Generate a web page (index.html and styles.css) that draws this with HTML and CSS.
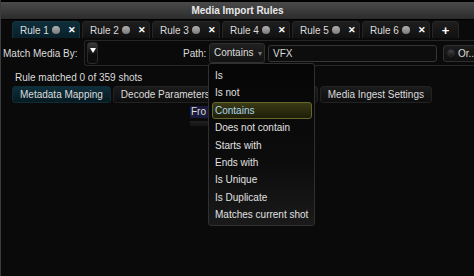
FILE: index.html
```html
<!DOCTYPE html>
<html lang="en">
<head>
  <meta charset="UTF-8">
  <title>Media Import Rules</title>
  <link rel="stylesheet" href="styles.css">
</head>
<body>
  <div class="titlebar">Media Import Rules</div>

  <div class="rule-tabs">
    <div class="tab active">Rule 1 <span class="dot"></span><span class="close">&#x2715;</span></div>
    <div class="tab">Rule 2 <span class="dot"></span><span class="close">&#x2715;</span></div>
    <div class="tab">Rule 3 <span class="dot"></span><span class="close">&#x2715;</span></div>
    <div class="tab">Rule 4 <span class="dot"></span><span class="close">&#x2715;</span></div>
    <div class="tab">Rule 5 <span class="dot"></span><span class="close">&#x2715;</span></div>
    <div class="tab">Rule 6 <span class="dot"></span><span class="close">&#x2715;</span></div>
    <div class="tab add">+</div>
  </div>

  <div class="match-row">
    <label class="match-label">Match Media By:</label>
    <div class="frame">
      <div class="drop-btn"><span class="arrow"></span></div>
      <label class="path-label">Path:</label>
      <div class="combo">Contains <span class="caret">&#x25BE;</span></div>
      <div class="field">VFX</div>
      <div class="or-btn"><span class="radio"></span>Or...</div>
    </div>
  </div>

  <p class="matched">Rule matched 0 of 359 shots</p>

  <div class="page-tabs">
    <div class="ptab active">Metadata Mapping</div>
    <div class="ptab">Decode Parameters</div>
    <div class="ptab hidden-tab"></div>
    <div class="ptab">Media Ingest Settings</div>
  </div>

  <div class="from-row">
    <span class="from">Fro</span>
    <span class="from-bar"></span>
  </div>

  <ul class="popup">
    <li>Is</li>
    <li>Is not</li>
    <li class="current">Contains</li>
    <li>Does not contain</li>
    <li>Starts with</li>
    <li>Ends with</li>
    <li>Is Unique</li>
    <li>Is Duplicate</li>
    <li>Matches current shot</li>
  </ul>
</body>
</html>
```

FILE: styles.css
```css
* {
  margin: 0;
  padding: 0;
  box-sizing: border-box;
}

body {
  width: 474px;
  height: 276px;
  overflow: hidden;
  position: relative;
  background-color: #0a0a0a;
  border-left: 1px solid #3c3c3c;
  font-family: 'Liberation Sans', Arial, sans-serif;
  font-size: 10px;
  color: #dcdcdc;
}

.titlebar {
  height: 20px;
  border-top: 2px solid #000;
  border-bottom: 1px solid #000;
  background: linear-gradient(#4a4a4a, #2c2c2c);
  text-align: center;
  font-weight: bold;
  line-height: 18px;
  color: #e8e8e8;
}

.rule-tabs {
  display: flex;
  gap: 2px;
  padding-left: 11px;
  margin-top: 1px;
  height: 17px;
}

.tab {
  width: 68px;
  display: flex;
  align-items: center;
  padding-left: 7px;
  border: 1px solid #262626;
  border-bottom: none;
  border-radius: 4px 4px 0 0;
  background: linear-gradient(#1e1e1e, #111);
  white-space: pre;
}

.tab.active {
  background: linear-gradient(#0f2f3b, #08202a);
  border-color: #143440;
}

.tab.add {
  width: 27px;
  justify-content: center;
  padding-left: 0;
  font-weight: bold;
  font-size: 13px;
  color: #fff;
}

.dot {
  width: 8px;
  height: 8px;
  border-radius: 50%;
  background: linear-gradient(#b0b0b0, #7a7a7a);
}

.close {
  margin-left: 8px;
  font-weight: bold;
  font-size: 9px;
  color: #fff;
}

.match-row {
  display: flex;
  align-items: center;
  height: 26px;
  margin-top: 2px;
}

.match-label {
  flex-shrink: 0;
  width: 83px;
  padding-left: 2px;
  white-space: nowrap;
}

.frame {
  flex: 1;
  min-width: 0;
  overflow: hidden;
  height: 26px;
  display: flex;
  align-items: center;
  border: 1px solid #262626;
  border-right: none;
  border-radius: 3px 0 0 3px;
  padding-left: 2px;
  white-space: nowrap;
}

.frame > * {
  flex-shrink: 0;
}

.drop-btn {
  width: 11px;
  height: 22px;
  border: 1px solid #2a2a2a;
  border-radius: 3px;
  background: linear-gradient(#3c3c3c, #0c0c0c 60%);
  display: flex;
  justify-content: center;
  padding-top: 5px;
}

.arrow {
  width: 0;
  height: 0;
  border-left: 3px solid transparent;
  border-right: 3px solid transparent;
  border-top: 5px solid #fff;
}

.path-label {
  margin-left: 85px;
  width: 26px;
}

.combo {
  width: 56px;
  height: 20px;
  line-height: 18px;
  padding-left: 4px;
  border: 1px solid #303030;
  border-radius: 3px;
  background: linear-gradient(#202020, #121212);
}

.caret {
  color: #777;
  font-size: 8px;
  margin-left: 2px;
}

.field {
  width: 169px;
  height: 17px;
  margin-left: 3px;
  line-height: 15px;
  padding-left: 4px;
  border: 1px solid #363636;
  border-radius: 3px;
  background-color: #0d0d0d;
}

.or-btn {
  margin-left: 6px;
  width: 40px;
  height: 17px;
  display: flex;
  align-items: center;
  gap: 3px;
  padding-left: 3px;
  border: 1px solid #303030;
  border-radius: 3px;
  background: linear-gradient(#1c1c1c, #101010);
}

.radio {
  width: 8px;
  height: 8px;
  border-radius: 50%;
  background: linear-gradient(#444, #1a1a1a);
  border: 1px solid #2a2a2a;
}

.matched {
  margin-top: 4px;
  padding-left: 14px;
  height: 15px;
  line-height: 15px;
}

.page-tabs {
  display: flex;
  gap: 2px;
  padding-left: 11px;
  margin-top: 1px;
  height: 17px;
}

.ptab {
  padding: 0 7px;
  line-height: 16px;
  border: 1px solid #222;
  border-radius: 3px;
  background: linear-gradient(#1c1c1c, #0e0e0e);
  white-space: nowrap;
}

.ptab.active {
  background: linear-gradient(#0f2f3b, #061a22);
  border-color: #102c36;
}

.hidden-tab {
  width: 98px;
}

.from-row {
  margin-top: 3px;
  padding-left: 189px;
}

.from {
  display: block;
  width: 18px;
  height: 12px;
  line-height: 12px;
  padding-left: 1px;
  background-color: #1a1a3c;
}

.from-bar {
  display: block;
  width: 18px;
  height: 5px;
  margin-top: 3px;
  background: linear-gradient(#202020, #141414);
}

.popup {
  position: absolute;
  left: 207px;
  top: 63px;
  width: 107px;
  height: 163px;
  list-style: none;
  padding: 3px 2px 0 3px;
  border: 1px solid #303030;
  border-radius: 3px;
  background: linear-gradient(#060606, #0c0c0c 60%, #1a1a1a);
}

.popup li {
  height: 17.4px;
  line-height: 17.4px;
  padding-left: 3px;
  white-space: nowrap;
  color: #e0e0e0;
}

.popup li.current {
  line-height: 15.4px;
  padding-left: 2px;
  border: 1px solid #67672a;
  border-radius: 3px;
  background: linear-gradient(#3a3a16, #1e1e0a);
  color: #a8d6e8;
}
```
